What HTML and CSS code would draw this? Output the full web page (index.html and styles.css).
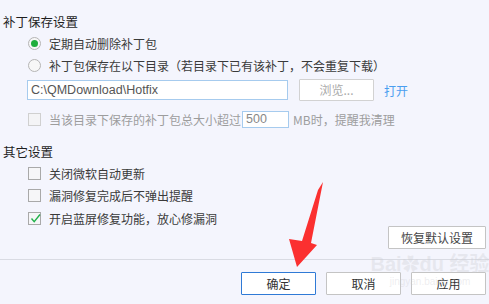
FILE: index.html
```html
<!DOCTYPE html>
<html lang="zh-CN">
<head>
<meta charset="utf-8">
<link rel="stylesheet" href="styles.css">
</head>
<body>
<div class="dialog">
  <div class="main">
    <div class="title">补丁保存设置</div>
    <div class="row opt"><span class="radio on"></span><span>定期自动删除补丁包</span></div>
    <div class="row opt"><span class="radio"></span><span>补丁包保存在以下目录（若目录下已有该补丁，不会重复下载）</span></div>
    <div class="row pathrow">
      <div class="input path">C:\QMDownload\Hotfix</div>
      <div class="btn browse">浏览...</div>
      <a class="link">打开</a>
    </div>
    <div class="row opt disabled">
      <span class="check"></span><span>当该目录下保存的补丁包总大小超过</span>
      <div class="input size">500</div><span class="after">MB时，提醒我清理</span>
    </div>
    <div class="title t2">其它设置</div>
    <div class="row opt other o1"><span class="check"></span><span>关闭微软自动更新</span></div>
    <div class="row opt other o2"><span class="check"></span><span>漏洞修复完成后不弹出提醒</span></div>
    <div class="row opt other o3"><span class="check checked"><svg viewBox="0 0 13 13" width="13" height="13"><path d="M2.5 6.5 L5.2 9.6 L11 2.5" fill="none" stroke="#21b24b" stroke-width="1.4"/></svg></span><span>开启蓝屏修复功能，放心修漏洞</span></div>
    <div class="restore-row"><div class="btn">恢复默认设置</div></div>
  </div>
  <div class="footer">
    <div class="btn primary">确定</div>
    <div class="btn">取消</div>
    <div class="btn">应用</div>
  </div>
  <div class="watermark"><span class="wm-big">Bai<span class="paw">&#10047;</span>du 经验</span><span class="wm-small">jingyan.baidu.com</span></div>
  <svg class="arrow" width="489" height="304" viewBox="0 0 489 304">
    <polygon points="323,182 311,243 317,245 297,267 289,239 302,241 318,190" fill="#fb3030"/>
  </svg>
</div>
</body>
</html>
```

FILE: styles.css
```css
* { box-sizing: border-box; }
html, body { margin: 0; padding: 0; }
body {
  width: 489px;
  height: 304px;
  overflow: hidden;
  background: #f4f5fd;
  font-family: "Noto Sans CJK SC", "Microsoft YaHei", sans-serif;
  font-size: 12px;
  color: #3a3a3a;
}
.dialog { position: relative; width: 489px; height: 304px; }
.main { padding: 12px 3px 0 3px; height: 260px; border-bottom: 1px solid #d9dbe3; }
.title { height: 20px; line-height: 20px; color: #1e1e1e; font-size: 12.5px; }
.t2 { margin-top: 12px; }
.row { display: flex; align-items: center; height: 21px; }
.opt { padding-left: 25px; margin-top: 1px; }
.opt > span:nth-child(2) { margin-left: 8px; }
.other { height: 20px; }
.o1 { margin-top: 1px; }
.o2 { margin-top: 2px; }
.o3 { margin-top: 3px; }
.radio {
  width: 13px; height: 13px; border-radius: 50%;
  border: 1px solid #b5b5b5; background: #f7f7f7;
  display: inline-flex; align-items: center; justify-content: center;
}
.radio.on::after { content: ""; width: 7px; height: 7px; border-radius: 50%; background: #1fae3b; }
.check {
  width: 13px; height: 13px; border: 1px solid #a9a9a9; background: #f6f6f8;
  display: inline-flex; align-items: center; justify-content: center; position: relative;
}
.check svg { position: absolute; left: 0; top: -1px; }
.disabled { color: #9d9d9d; margin-top: 7px; }
.disabled .check { border-color: #d0d0d0; background: #f4f4f6; }
.pathrow { height: 24px; margin-top: 2px; padding-left: 24px; }
.input {
  height: 20px; line-height: 18px; border: 1px solid #a6cbee; background: #fff;
  padding-left: 3px; color: #555;
}
.path { width: 261px; font-family: "Liberation Sans", "Noto Sans", sans-serif; font-size: 12.5px; }
.btn {
  height: 23px; line-height: 21px; border: 1px solid #c4c4c4; background: #fff;
  text-align: center; color: #333; padding: 0 12px; border-radius: 1px;
}
.browse { width: 75px; margin-left: 11px; height: 22px; line-height: 20px; color: #aaa; border-color: #d2d2d2; }
.link { margin-left: 10px; color: #4a9ef0; }
.size { width: 47px; margin-left: 1px; height: 17px; line-height: 15px; font-family: "Liberation Sans", "Noto Sans", sans-serif; font-size: 12.5px; color: #888; }
.after { margin-left: 4px; }
.restore-row { display: flex; justify-content: flex-end; margin-top: -2px; }
.restore-row .btn { width: 98px; color: #444; }
.footer { display: flex; justify-content: flex-end; gap: 10px; padding: 12px 3px 0 0; }
.footer .btn { width: 75px; }
.footer .btn.primary { border-color: #2f7ad6; }
.watermark {
  position: absolute; left: 430px; top: 253px; display: flex; flex-direction: column; align-items: center;
  color: rgba(205, 205, 210, 0.35); font-family: "Liberation Sans", "Noto Sans CJK SC", sans-serif; pointer-events: none;
  transform: translateX(-50%);
}
.wm-big { font-size: 20px; font-weight: bold; line-height: 22px; white-space: nowrap; }
.paw { font-size: 18px; }
.wm-small { font-size: 10px; line-height: 12px; white-space: nowrap; }
.arrow { position: absolute; left: 0; top: 0; pointer-events: none; }
```
